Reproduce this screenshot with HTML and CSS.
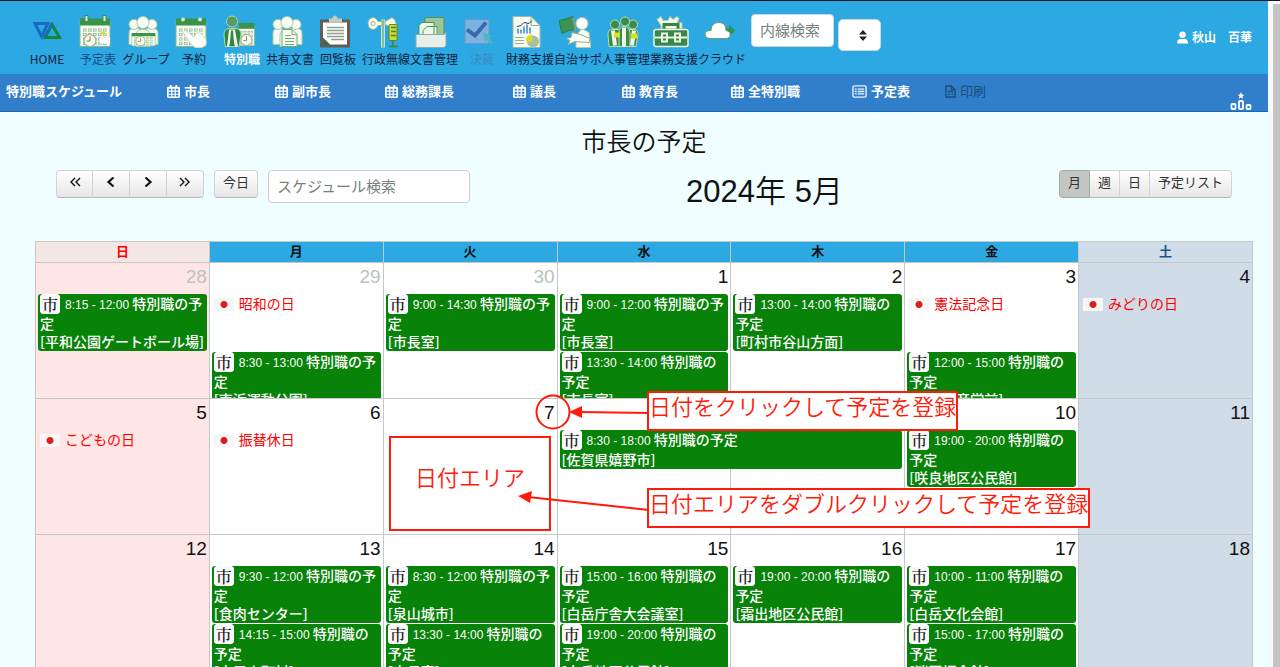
FILE: index.html
```html
<!DOCTYPE html>
<html lang="ja">
<head>
<meta charset="utf-8">
<title>市長の予定</title>
<link rel="stylesheet" href="styles.css">
</head>
<body>
<svg class="defs" aria-hidden="true">
  <symbol id="cal" viewBox="0 0 14 16"><path fill="#fff" fill-rule="evenodd" d="M3 1h2v2h4V1h2v2h1.500Q14 3 14 4.500v9Q14 15 12.500 15h-11Q0 15 0 13.500v-9Q0 3 1.500 3H3zM1.800 5v2h2.700V5zm4 0v2h2.400V5zm3.700 0v2h2.700V5zM1.800 8.400v2h2.700v-2zm4 0v2h2.400v-2zm3.700 0v2h2.700v-2zM1.800 11.600v1.800h2.700v-1.800zm4 0v1.800h2.400v-1.800zm3.700 0v1.800h2.700v-1.800z"/></symbol>
  <symbol id="month" viewBox="0 0 32 32" preserveAspectRatio="none"><path fill="#f6faf0" stroke="#8ab58c" d="M1 6h30v25H1z"/><path fill="#3b9348" d="M1 3h30v7H1z"/><path stroke="#8eb990" stroke-width="3" fill="none" stroke-dasharray="3.500 1.500" d="M4 14.500h25M4 19h25M4 23.500h25M4 28h25"/><path stroke="#f1f8ec" stroke-width="1.500" fill="none" stroke-dasharray="2 3" d="M4.700 14.500h24M4.700 19h24M4.700 23.500h24M4.700 28h24"/></symbol>
  <symbol id="clock" viewBox="0 0 14 14"><circle cx="7" cy="7" r="6" fill="#fff8ed" stroke="#98b994" stroke-width="1.200"/><path d="M7 3v4.500H3.500" fill="none" stroke="#5f8d63"/></symbol>
  <symbol id="people" viewBox="0 0 32 32"><g fill="#f8fbf4" stroke="#a9cda1"><path d="M2 29V18q0-5 4-5h4q5 0 5 5v11zM17 29V18q0-5 5-5h4q5 0 5 5v11z"/><circle cx="7" cy="9" r="5"/><circle cx="25" cy="9" r="5"/><path d="M9 31V20q0-6 7-6t7 6v11z"/><circle cx="16" cy="7" r="6"/></g></symbol>
</svg>
<div class="app">
<div class="page">
  <header class="topbar">
    <nav class="modules">
      <a href="#"><svg viewBox="0 0 32 32"><path d="M4 8h13L10.500 21z" fill="none" stroke="#176cc2" stroke-width="3"/><path d="M21 9l7.500 13H14z" fill="none" stroke="#138637" stroke-width="3"/><path d="M21 8l-8 14" stroke="#176cc2" stroke-width="2.500"/></svg><span>HOME</span></a>
      <a href="#"><svg viewBox="0 0 32 32"><use href="#month"/><path fill="#dce9d5" stroke="#3b9348" d="M6 0h3v6H6zM24 0h3v6h-3z"/><path d="M22 16h4v3h-4z" fill="#e1df20"/><path d="M21 22h10v6H21z" fill="#fff"/><use href="#clock" x="4" y="18" width="14" height="14"/></svg><span class="navy">予定表</span></a>
      <a href="#"><svg viewBox="0 0 32 32"><use href="#people"/><use href="#month" x="4" y="16" width="25" height="15"/><use href="#clock" x="8" y="20" width="11" height="11"/></svg><span>グループ</span></a>
      <a href="#"><svg viewBox="0 0 32 32"><use href="#month"/><circle cx="8" cy="4" r="2" fill="#d8e7cf"/><circle cx="25" cy="4" r="2" fill="#d8e7cf"/><path fill="#fff" stroke="#d3dfc9" d="M8 17q1-3 4-1l7 6 2-4q4-2 6 1l4 5v5l-4 3h-7l-5-5z"/></svg><span>予約</span></a>
      <a href="#" class="current"><svg viewBox="0 0 32 32"><use href="#month" x="15" y="5" width="17" height="26"/><path fill="#2e8746" stroke="#b4d3a5" d="M2 31L1 19q0-5 5-6h7q5 1 5 6l-2 12z"/><path fill="#f2f5df" d="M6 14h6l3 17h-3l-3-12-3 12H4z"/><path fill="#2e8746" d="M8 15h2l1 14H7z"/><circle cx="9" cy="6" r="5.500" fill="#559a64" stroke="#b4d3a5"/><use href="#clock" x="17" y="18" width="13" height="13"/></svg><span>特別職</span></a>
      <a href="#"><svg viewBox="0 0 32 32"><use href="#people"/><path fill="#f5faee" stroke="#78a877" d="M11 14h10l5 5v12H11z"/><path fill="none" stroke="#7ea67a" d="M21 14v5h5M14 20h6M14 23h9M14 26h9M14 29h9"/></svg><span>共有文書</span></a>
      <a href="#"><svg viewBox="0 0 32 32"><path fill="#625d57" d="M1 4h30v28H1z"/><path fill="#fff" d="M4 7h24v22H11l-7-7z"/><path fill="#326e41" d="M4 23l7 6H4z"/><path fill="#c9c9bf" d="M10 3h3q3-6 6 0h4v4H10z"/><path stroke="#8d9e89" stroke-width="1.300" d="M8 12h17M8 15h17M8 18h17M8 21h17M12 24h13"/></svg><span>回覧板</span></a>
      <a href="#"><svg viewBox="0 0 32 32"><path stroke="#f3f6e8" stroke-width="3.500" d="M16 4v28"/><path stroke="#76a278" stroke-width="1.500" d="M16 4v28"/><path fill="#f7faef" stroke="#96b792" d="M7 2q-6 0-6 6t6 6q3-1 4-4h4V6h-4q-1-3-4-4zM18 6l7-4q5 3 4 9l-4 1-7-3z"/><circle cx="6" cy="8" r="2" fill="#fff" stroke="#91b58d"/><rect x="22" y="9" width="8" height="16" rx="1" fill="#d6d92f" stroke="#548b23"/><path stroke="#39893e" stroke-width="1.500" d="M24 12h5M24 16h5M24 20h5M26 25v6M22 31h9"/></svg><span>行政無線</span></a>
      <a href="#"><svg viewBox="0 0 32 32"><path fill="#9bc49a" stroke="#548e5b" d="M10 2h19v24H10z"/><path fill="#eef6e6" stroke="#4f955b" d="M4 10l3-3h12v19H4zM8 15l4-4h10v15H8z"/><path fill="#e8eeea" stroke="#8eaaae" d="M1 19h28l2-2v13l-2 2H1z"/></svg><span>文書管理</span></a>
      <a href="#" class="muted"><svg viewBox="0 0 32 32"><path fill="#7eb3df" stroke="#5f9acd" d="M2 4h24v24H2z"/><path fill="none" stroke="#3c68ad" stroke-width="4" d="M4 14l8 6L23 7"/><path fill="#4bb9c4" d="M20 17l10 4-4 1 4 5-2 2-4-5-2 3z"/></svg><span>決裁</span></a>
      <a href="#"><svg viewBox="0 0 32 32"><path fill="#f7faf5" stroke="#a3bd9c" d="M2 1h18l9 9v22H2z"/><path fill="none" stroke="#95b38d" d="M20 1v9h9M4 22h9M4 25h9M4 28h9"/><path stroke="#67a7d0" stroke-width="2" d="M7 18v-5M10 18v-4M13 18v-7M16 18V9M19 18v-6"/><path fill="none" stroke="#2f3741" d="M6 11l4-1 3-3 5 1 3-3"/><circle cx="22" cy="26" r="6" fill="#a8c0a2"/><path fill="#e1dd23" d="M21 26v-7a6 6 0 0 0-6 7z"/></svg><span>財務支援</span></a>
      <a href="#"><svg viewBox="0 0 32 32"><path fill="#3d9450" stroke="#297d4b" d="M0 5l5-1 9-3 1 13-5 1-7 3z"/><path stroke="#7f9d76" stroke-width="2" d="M14 2l4 23"/><path fill="#f9fbf5" stroke="#b2c8a6" d="M17 32V20l6-7 7 4 2 15z"/><circle cx="23" cy="8" r="6" fill="#fff" stroke="#b2c8a6"/><path fill="#fff" stroke="#8baf81" d="M13 17l8 2 10 4-1 4-14-1-7 3 2-4-4-2 5-1z"/></svg><span>自治サポ</span></a>
      <a href="#"><svg viewBox="0 0 32 32"><g fill="#378e4a" stroke="#c0dba6"><path d="M2 31L1 19q0-5 4-5h6q4 0 4 5l-2 12zM18 31l-1-12q0-5 4-5h6q4 0 4 5l-2 12z"/><circle cx="8" cy="9" r="4.500"/><circle cx="26" cy="9" r="4.500"/><path d="M12 31V17q0-6 5-6t6 6v14z"/><circle cx="18" cy="6" r="4.500"/></g><path stroke="#f4f5e9" stroke-width="4" d="M6 15l2 15M17 12v19M27 15l-2 15"/><path fill="#dadf22" d="M7 17h6v5H7zM24 18h6v5h-6z"/></svg><span>人事管理</span></a>
      <a href="#"><svg class="wide" viewBox="0 0 36 32"><path fill="#f3f6e9" stroke="#b6cba3" d="M8 10L4 4l4-3 2 4h5l2-4 3 3 4-3 2 2-2 5 5-1v6H8z"/><path fill="none" stroke="#328545" stroke-width="3" d="M11 15V9h14v6"/><rect x="1" y="14" width="34" height="17" rx="2" fill="#39864c" stroke="#edf3df" stroke-width="1.500"/><path fill="none" stroke="#edf3df" stroke-width="2" d="M2 22h32M9 18h5v8H9zM22 18h5v8h-5z"/></svg><span>業務支援</span></a>
      <a href="#"><svg viewBox="0 0 32 32"><path fill="#2d934b" d="M20 13h6V9l6 6-6 6v-4h-6z"/><path fill="#fff" stroke="#719d67" d="M6 23q-4-1-4-4 0-4 6-4 0-8 8-8 7 0 7 8 5 1 4 5 0 3-5 3z"/></svg><span>クラウド</span></a>
    </nav>
    <form class="extension">
      <input type="text" placeholder="内線検索" aria-label="内線検索">
      <div class="picker"><select aria-label="検索候補"><option></option></select>
        <svg viewBox="0 0 8 11" aria-hidden="true"><path d="M0 4.500L4 0l4 4.500zM0 6.500h8L4 11z" fill="#222"/></svg></div>
    </form>
    <a href="#" class="user"><svg viewBox="0 0 12 13"><circle cx="6" cy="3.500" r="3.500" fill="#fff"/><path d="M0 13q0-5 3.500-5h5Q12 8 12 13z" fill="#fff"/></svg>秋山　百華</a>
  </header>
  <nav class="subnav">
    <div class="links">
      <a href="#">特別職スケジュール</a>
      <a href="#"><svg><use href="#cal"/></svg>市長</a>
      <a href="#"><svg><use href="#cal"/></svg>副市長</a>
      <a href="#"><svg><use href="#cal"/></svg>総務課長</a>
      <a href="#"><svg><use href="#cal"/></svg>議長</a>
      <a href="#"><svg><use href="#cal"/></svg>教育長</a>
      <a href="#"><svg><use href="#cal"/></svg>全特別職</a>
      <a href="#"><svg class="list" viewBox="0 0 16 14"><rect x="1" y="1" width="14" height="12" rx="1.500" fill="none" stroke="#e9f4ff" stroke-width="1.500"/><path stroke="#e9f4ff" stroke-width="1.500" d="M3 4.500h2M6 4.500h7M3 7h2M6 7h7M3 9.500h2M6 9.500h7"/></svg>予定表</a>
      <a href="#" class="print"><svg viewBox="0 0 12 16"><path d="M1 2h6l4 4v8H1zM7 2v4h4M3 8h6M3 11h2M7 11h2" fill="none" stroke="#174f78" stroke-width="1.500"/></svg>印刷</a>
    </div>
    <button class="rank" aria-label="ランキング"><svg viewBox="0 0 22 18"><path fill="#fff" d="M11 0l1 2.500 2.500.2-2 1.600.7 2.500L11 5.400 8.800 6.800l.7-2.500-2-1.600L10 2.500z"/><g fill="none" stroke="#fff" stroke-width="1.800"><rect x="1.500" y="12" width="4" height="5" rx="1"/><rect x="9" y="9" width="4" height="8" rx="1"/><rect x="16.500" y="13" width="4" height="4" rx="1"/></g></svg></button>
  </nav>
  <main>
    <h1>市長の予定</h1>
    <div class="toolbar">
      <div class="left">
        <div class="group arrows">
          <button aria-label="前年"><svg viewBox="0 0 12 10"><path d="M6 1L2 5l4 4M11 1L7 5l4 4" fill="none" stroke="#111" stroke-width="1.400"/></svg></button>
          <button aria-label="前月"><svg viewBox="0 0 12 10"><path d="M8.500 0.500L3.500 5l5 4.500" fill="none" stroke="#111" stroke-width="2.200"/></svg></button>
          <button aria-label="翌月"><svg viewBox="0 0 12 10"><path d="M3.500 0.500L8.500 5l-5 4.500" fill="none" stroke="#111" stroke-width="2.200"/></svg></button>
          <button aria-label="翌年"><svg viewBox="0 0 12 10"><path d="M1 1l4 4-4 4M6 1l4 4-4 4" fill="none" stroke="#111" stroke-width="1.400"/></svg></button>
        </div>
        <div class="group"><button>今日</button></div>
        <input type="text" placeholder="スケジュール検索" aria-label="スケジュール検索">
      </div>
      <h2>2024年 5月</h2>
      <div class="group views"><button class="on">月</button><button>週</button><button>日</button><button>予定リスト</button></div>
    </div>
    <table class="calendar">
      <thead><tr><th class="sun">日</th><th>月</th><th>火</th><th>水</th><th>木</th><th>金</th><th class="sat">土</th></tr></thead>
      <tbody>
        <tr>
          <td class="sun"><div class="day"><span class="date other">28</span>
            <a href="#" class="event"><b>市</b><time>8:15 - 12:00</time> 特別職の予定<br>[平和公園ゲートボール場]</a></div></td>
          <td><div class="day"><span class="date other">29</span>
            <div class="holiday"><i></i>昭和の日</div>
            <a href="#" class="event"><b>市</b><time>8:30 - 13:00</time> 特別職の予定<br>[南浜運動公園]</a></div></td>
          <td><div class="day"><span class="date other">30</span>
            <a href="#" class="event"><b>市</b><time>9:00 - 14:30</time> 特別職の予定<br>[市長室]</a></div></td>
          <td><div class="day"><span class="date">1</span>
            <a href="#" class="event"><b>市</b><time>9:00 - 12:00</time> 特別職の予定<br>[市長室]</a>
            <a href="#" class="event"><b>市</b><time>13:30 - 14:00</time> 特別職の予定<br>[市長室]</a></div></td>
          <td><div class="day"><span class="date">2</span>
            <a href="#" class="event"><b>市</b><time>13:00 - 14:00</time> 特別職の予定<br>[町村市谷山方面]</a></div></td>
          <td><div class="day"><span class="date">3</span>
            <div class="holiday"><i></i>憲法記念日</div>
            <a href="#" class="event"><b>市</b><time>12:00 - 15:00</time> 特別職の予定<br>[市公会音堂前]</a></div></td>
          <td class="sat"><div class="day"><span class="date">4</span><div class="holiday"><i></i>みどりの日</div></div></td>
        </tr>
        <tr>
          <td class="sun"><div class="day"><span class="date">5</span><div class="holiday"><i></i>こどもの日</div></div></td>
          <td><div class="day"><span class="date">6</span><div class="holiday"><i></i>振替休日</div></div></td>
          <td><div class="day"><span class="date">7</span></div></td>
          <td><div class="day spanning"><span class="date">8</span>
            <a href="#" class="event two-days"><b>市</b><time>8:30 - 18:00</time> 特別職の予定<br>[佐賀県嬉野市]</a></div></td>
          <td><div class="day"><span class="date">9</span></div></td>
          <td><div class="day"><span class="date">10</span>
            <a href="#" class="event"><b>市</b><time>19:00 - 20:00</time> 特別職の予定<br>[咲良地区公民館]</a></div></td>
          <td class="sat"><div class="day"><span class="date">11</span></div></td>
        </tr>
        <tr>
          <td class="sun"><div class="day"><span class="date">12</span></div></td>
          <td><div class="day"><span class="date">13</span>
            <a href="#" class="event"><b>市</b><time>9:30 - 12:00</time> 特別職の予定<br>[食肉センター]</a>
            <a href="#" class="event"><b>市</b><time>14:15 - 15:00</time> 特別職の予定<br>[大元山町村]</a></div></td>
          <td><div class="day"><span class="date">14</span>
            <a href="#" class="event"><b>市</b><time>8:30 - 12:00</time> 特別職の予定<br>[泉山城市]</a>
            <a href="#" class="event"><b>市</b><time>13:30 - 14:00</time> 特別職の予定<br>[市長室]</a></div></td>
          <td><div class="day"><span class="date">15</span>
            <a href="#" class="event"><b>市</b><time>15:00 - 16:00</time> 特別職の予定<br>[白岳庁舎大会議室]</a>
            <a href="#" class="event"><b>市</b><time>19:00 - 20:00</time> 特別職の予定<br>[白岳地区公民館]</a></div></td>
          <td><div class="day"><span class="date">16</span>
            <a href="#" class="event"><b>市</b><time>19:00 - 20:00</time> 特別職の予定<br>[霜出地区公民館]</a></div></td>
          <td><div class="day"><span class="date">17</span>
            <a href="#" class="event"><b>市</b><time>10:00 - 11:00</time> 特別職の予定<br>[白岳文化会館]</a>
            <a href="#" class="event"><b>市</b><time>15:00 - 17:00</time> 特別職の予定<br>[消医師会館]</a></div></td>
          <td class="sat"><div class="day"><span class="date">18</span></div></td>
        </tr>
      </tbody>
    </table>
  </main>
  <div class="notes">
    <svg width="1268" height="667" viewBox="0 0 1268 667" aria-hidden="true">
      <g fill="none" stroke="#ff1a0a" stroke-width="2"><circle cx="553" cy="412" r="16.500"/><path d="M580 412l69 1M528 497l121 13"/></g>
      <path fill="#ff1a0a" d="M569 412l13-6v12zM518 496l14-5-2 12z"/>
    </svg>
    <div class="area">日付エリア</div>
    <div class="callout on-date">日付をクリックして予定を登録</div>
    <div class="callout on-area">日付エリアをダブルクリックして予定を登録</div>
  </div>
</div>
<div class="scrollbar"></div>
</div>
</body>
</html>
```
FILE: styles.css
```css
* { box-sizing: border-box; }
body { margin: 0; font-family: "Noto Sans CJK JP", sans-serif; font-size: 14px; color: #111; background: #f0feff; }
a { color: inherit; text-decoration: none; }
button, input, select { font-family: inherit; margin: 0; }
.defs { position: absolute; width: 0; height: 0; }
.app { display: flex; height: 100vh; overflow: hidden; border-top: 1px solid #111820; }
.page { position: relative; flex: 1; min-width: 0; }
.scrollbar { width: 12px; background: #c4c4c4; border-left: 5px solid #f7f9fa; border-top: 3px solid #f7f9fa; }

.topbar { display: flex; align-items: flex-start; height: 73px; padding-left: 23px; padding-right: 16px; background: #2ca8e2; }
.modules { display: flex; padding-top: 14px; }
.modules a { display: flex; flex-direction: column; align-items: center; width: 48px; font-size: 12px; line-height: 18px; color: #12233f; white-space: nowrap; }
.modules a + a span { margin-left: 6px; }
.modules svg { width: 32px; height: 33px; margin-bottom: 2px; }
.modules svg.wide { width: 36px; }
.modules .navy { color: #174a86; }
.modules .current { color: #fff; font-weight: bold; }
.modules .muted { color: #3f86c6; }
.extension { display: flex; gap: 4px; padding: 13px 0 0 8px; }
.extension input { width: 83px; height: 33px; padding: 0 8px 2px; font-size: 15px; border: 1px solid #cbd7dc; border-radius: 4px; background: #fff; }
::placeholder { color: #74827a; opacity: 1; }
.picker { position: relative; margin-top: 5px; }
.picker select { appearance: none; width: 43px; height: 32px; border: 1px solid #cbd7dc; border-radius: 5px; background: #fff; }
.picker svg { position: absolute; left: 21px; top: 11px; width: 8px; height: 11px; pointer-events: none; }
.user { display: flex; align-items: center; gap: 4px; margin-left: auto; margin-top: 27px; font-size: 12px; line-height: 18px; font-weight: bold; color: #fff; white-space: nowrap; }
.user svg { width: 11px; height: 13px; }

.subnav { display: flex; justify-content: space-between; height: 38px; padding: 7px 16px 0 6px; background: #317eca; border-bottom: 1px solid #1b6ab8; }
.links { display: grid; grid-template-columns: 161px 108px 110px 128px 109px 109px 121px 93px auto; height: 20px; }
.links a { display: flex; align-items: center; gap: 4px; font-size: 13px; line-height: 20px; font-weight: bold; color: #fff; white-space: nowrap; }
.links svg { width: 13px; height: 15px; }
.links svg.list { width: 15px; }
.links .print { color: #174f78; font-weight: normal; }
.links .print svg { width: 11px; }
.rank { align-self: flex-end; height: 18px; padding: 0; margin-bottom: 1px; border: 0; background: none; }
.rank svg { display: block; width: 22px; height: 18px; }

h1 { margin: 0; padding: 10px 0 2px 20px; font-size: 25px; line-height: 36px; font-weight: 350; text-align: center; }
.toolbar { display: flex; justify-content: space-between; align-items: flex-start; height: 81px; padding: 10px 36px 0 56px; }
.left { display: flex; gap: 10px; }
.group { display: flex; height: 28px; }
.group button { padding: 0 8px 4px; border: 1px solid #cfd4d4; border-left-width: 0; border-bottom-color: #b5b8b8; background: linear-gradient(#fff, #e6e6e6); font-size: 13px; line-height: 20px; color: #333; }
.group button:first-child { border-left-width: 1px; border-radius: 4px 0 0 4px; }
.group button:last-child { border-radius: 0 4px 4px 0; }
.group button:only-child { border-radius: 4px; }
.arrows button { width: 37px; }
.arrows svg { width: 12px; height: 10px; }
.group .on { background: #c4c6c4; border-color: #9db09d; }
.left input { width: 202px; height: 33px; padding: 0 8px 2px; border: 1px solid #ccd0d4; border-radius: 4px; font-size: 15px; background: #fff; }
h2 { margin: 0; font-family: "Liberation Sans", "Noto Sans CJK JP", sans-serif; font-size: 31px; line-height: 44px; font-weight: 350; white-space: nowrap; }

.calendar { width: calc(100% - 50px); margin-left: 35px; table-layout: fixed; border-collapse: collapse; }
th, td { border: 1px solid #c6c8c8; padding: 0; }
th { height: 21px; background: #2ca8e2; font-size: 13px; line-height: 18px; padding-bottom: 2px; }
td { background: #fff; vertical-align: top; }
th.sun { background: #f5e6e6; color: #f00; }
td.sun { background: #ffe6e6; }
th.sat { color: #16568c; }
th.sat, td.sat { background: #d0dce8; }
.day { height: 135px; padding: 0 2px; overflow: hidden; }
.spanning { overflow: visible; }
.date { display: block; height: 31px; padding-top: 3px; font-family: "Liberation Sans", sans-serif; font-size: 19px; line-height: 22px; text-align: right; }
.other { color: #b9c4ba; }
.event { display: block; margin-bottom: 1px; padding: 0 2px 1px; border-radius: 3px; background: #088208; color: #fff; font-size: 14px; line-height: 18px; font-weight: 500; }
.event b { display: inline-block; width: 20px; height: 20px; margin-right: 5px; border: 1px solid #fff; border-radius: 3px; background: #f8f8f8; color: #111; font-family: "Noto Serif CJK JP", "Noto Sans CJK JP", serif; font-size: 16px; line-height: 20px; font-weight: 500; text-align: center; vertical-align: top; }
.event time { font-family: "Liberation Sans", sans-serif; font-size: 12px; }
.two-days { position: relative; width: calc(200% + 5px); }
.holiday { display: flex; align-items: flex-start; gap: 5px; height: 58px; padding-left: 2px; color: #f00; font-size: 14px; line-height: 18px; }
.holiday i { width: 20px; height: 13px; margin-top: 4px; background: radial-gradient(circle, #d8201a 3px, #f6f6f6 4px); }

.notes { position: absolute; inset: -1px 0 auto 0; height: 667px; color: #ff1a0a; font-size: 22px; line-height: 24px; font-weight: 350; pointer-events: none; white-space: nowrap; }
.notes svg { position: absolute; inset: 0; z-index: 1; }
.area { position: absolute; left: 389px; top: 436px; width: 162px; height: 95px; padding-top: 26px; border: 2px solid #ff1a0a; text-align: center; }
.callout { position: absolute; left: 647px; height: 40px; border: 2px solid #ff1a0a; background: #fff; }
.on-date { top: 391px; }
.on-area { top: 488px; }
```
